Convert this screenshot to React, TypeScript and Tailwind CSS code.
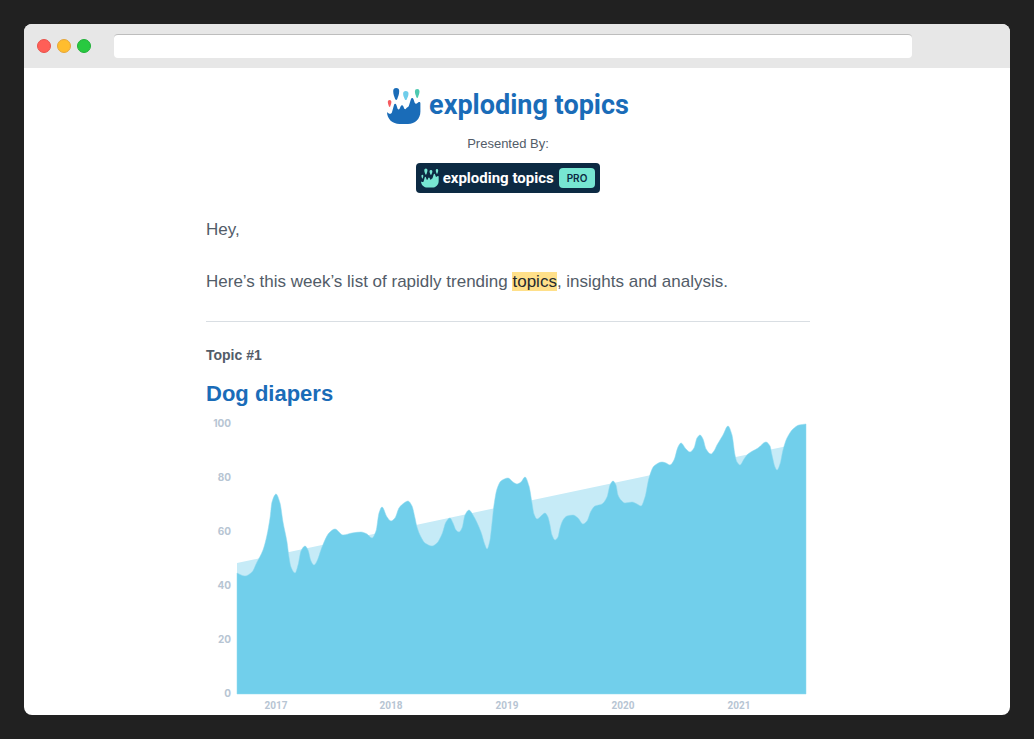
type Point = [number, number];

const BASELINE = 282;

const trend: Point[] = [
  [31, 151],
  [600, 30],
];

const interest: Point[] = [
  [31, 161], [39, 164], [46, 160], [51, 150], [57, 138], [61, 123], [64, 106], [66, 90],
  [70, 82], [74, 91], [77, 110], [81, 130], [83, 145], [85, 155], [89, 161], [92, 153],
  [95, 139], [99, 134], [102, 138], [105, 149], [108, 153], [111, 149], [116, 135],
  [123, 121], [129, 117], [137, 123], [146, 121], [155, 120], [161, 122], [166, 126],
  [170, 119], [173, 101], [176, 95], [181, 105], [185, 109], [189, 106], [193, 96],
  [198, 91], [202, 89], [206, 94], [209, 106], [211, 115], [215, 125], [219, 131],
  [226, 134], [231, 131], [236, 122], [240, 110], [244, 106], [247, 111], [250, 118],
  [253, 120], [256, 116], [259, 103], [263, 98], [267, 103], [275, 120], [279, 133],
  [281, 137], [284, 128], [286, 111], [288, 93], [291, 77], [295, 69], [302, 66],
  [307, 70], [311, 72], [315, 70], [319, 65], [323, 74], [326, 91], [328, 102],
  [331, 107], [335, 104], [339, 101], [342, 105], [344, 113], [346, 123], [349, 128],
  [352, 125], [354, 116], [357, 108], [361, 104], [367, 103], [372, 106], [377, 112],
  [381, 109], [385, 99], [389, 94], [396, 92], [401, 85], [404, 73], [407, 69],
  [410, 73], [412, 83], [415, 88], [419, 91], [426, 90], [431, 92], [435, 94],
  [439, 85], [443, 66], [448, 54], [456, 50], [460, 51], [464, 53], [468, 48],
  [472, 35], [475, 31], [480, 37], [484, 40], [488, 36], [491, 26], [494, 23],
  [497, 27], [500, 37], [505, 42], [508, 39], [511, 33], [517, 23], [522, 14],
  [526, 23], [529, 43], [531, 50], [534, 53], [538, 47], [542, 42], [552, 36],
  [560, 30], [564, 34], [566, 43], [569, 55], [571, 58], [574, 52], [577, 38],
  [581, 26], [587, 17], [593, 13], [600, 12],
];

const scale = [
  { label: "100", y: 15 },
  { label: "80", y: 69 },
  { label: "60", y: 123 },
  { label: "40", y: 177 },
  { label: "20", y: 231 },
  { label: "0", y: 285 },
];

const years = [
  { label: "2017", x: 70 },
  { label: "2018", x: 185 },
  { label: "2019", x: 301 },
  { label: "2020", x: 417 },
  { label: "2021", x: 533 },
];

// Cubic curve through the points that stays monotone between neighbours.
function smoothArea(points: Point[]) {
  const last = points.length - 1;
  const slope = (i: number) => (points[i + 1][1] - points[i][1]) / (points[i + 1][0] - points[i][0]);
  const tangents = points.map((_, i) => {
    if (i === 0) return slope(0);
    if (i === last) return slope(last - 1);
    const left = slope(i - 1);
    const right = slope(i);
    return left * right <= 0 ? 0 : (2 * left * right) / (left + right);
  });
  let d = `M${points[0][0]} ${BASELINE}L${points[0][0]} ${points[0][1]}`;
  for (let i = 0; i < last; i++) {
    const [x0, y0] = points[i];
    const [x1, y1] = points[i + 1];
    const step = (x1 - x0) / 3;
    d += `C${x0 + step} ${y0 + step * tangents[i]} ${x1 - step} ${y1 - step * tangents[i + 1]} ${x1} ${y1}`;
  }
  return `${d}L${points[last][0]} ${BASELINE}Z`;
}

function drop(x: number, y: number, r: number, h: number) {
  return `M${x - r} ${y + r}a${r} ${r} 0 0 1 ${2 * r} 0C${x + r} ${y + h * 0.55} ${x + r * 0.6} ${y + h * 0.7} ${x + r * 0.35} ${y + h * 0.92}Q${x} ${y + h * 1.06} ${x - r * 0.35} ${y + h * 0.92}C${x - r * 0.6} ${y + h * 0.7} ${x - r} ${y + h * 0.55} ${x - r} ${y + r}Z`;
}

type SplashProps = {
  className: string;
  body: string;
  drops: [string, string, string, string];
};

function Splash({ className, body, drops }: SplashProps) {
  return (
    <svg viewBox="0 0 34 36" className={className} aria-hidden="true">
      <path
        fill={body}
        d="M0 24C1.600 26 4 26.500 4.900 24.500L7 17C7.400 15.400 8.900 15.400 9.400 17L10.600 20.700C11 21.800 12.200 21.800 12.600 20.700L13.700 18.200C14.200 16.800 15.800 16.800 16.300 18.200L17.200 20.400C17.600 21.400 18.600 21.400 19.100 20.600C19.800 19.300 21.300 19.600 21.900 17.800L23.900 11.300C24.300 9.700 26 9.700 26.500 11.300L27.700 14.700C28.200 16.200 29.700 16 30.500 15C31.400 13.700 33.400 13.800 33.400 15.200V23.500C33.400 31 28 36 21 36H12.500C5.500 36 0 31 0 24Z"
      />
      <path fill={drops[0]} d={drop(2.6, 12, 1.8, 7)} />
      <path fill={drops[1]} d={drop(9.2, 0, 3, 12)} />
      <path fill={drops[2]} d={drop(18.8, 3, 2.7, 9.2)} />
      <path fill={drops[3]} d={drop(30.2, 1, 2.3, 9)} />
    </svg>
  );
}

function TitleBar() {
  return (
    <header className="flex h-11 items-center bg-[#e7e7e7] pl-[13px]">
      <div className="flex gap-[6px]">
        <span className="size-[14px] rounded-full border border-[#e8524b] bg-[#ff5f57]" />
        <span className="size-[14px] rounded-full border border-[#e5a63a] bg-[#ffbd2e]" />
        <span className="size-[14px] rounded-full border border-[#20b038] bg-[#28c940]" />
      </div>
      <input
        type="text"
        aria-label="Address"
        className="mr-[98px] ml-[23px] h-6 flex-1 rounded border-t border-[#bdbdbd] bg-white px-2 text-sm outline-none"
      />
    </header>
  );
}

function TrendChart() {
  return (
    <svg viewBox="0 0 604 303" className="block w-full" role="img" aria-label="Interest over time">
      <path fill="#c6ebf7" d={smoothArea(trend)} />
      <path fill="#71cfeb" stroke="#8ed9ef" strokeWidth="0.5" d={smoothArea(interest)} />
      <g fill="#b7c5d3" className="font-['Inter',sans-serif] text-[10px] font-bold">
        {scale.map(({ label, y }) => (
          <text key={label} x="25" y={y} textAnchor="end">
            {label}
          </text>
        ))}
      </g>
      <g fill="#b7c5d3" className="font-['Roboto',sans-serif] text-[10px] font-bold">
        {years.map(({ label, x }) => (
          <text key={label} x={x} y="297" textAnchor="middle">
            {label}
          </text>
        ))}
      </g>
    </svg>
  );
}

export default function App() {
  return (
    <div className="min-h-screen bg-[#212121] p-6 font-['Liberation_Sans',Arial,sans-serif]">
      <div className="overflow-hidden rounded-lg bg-white">
        <TitleBar />
        <main className="pt-5 pr-[18px]">
          <article className="mx-auto max-w-[604px] text-[17px] leading-[26px] text-[#525c68]">
            <div className="flex flex-col items-center">
              <div className="flex items-start gap-2">
                <Splash
                  className="h-9 w-[34px]"
                  body="#1a6cb8"
                  drops={["#f65b5f", "#1a6cb8", "#6fcdea", "#4dc9b0"]}
                />
                <span className="font-['Roboto',sans-serif] text-[27px] leading-[34px] font-bold text-[#1a6cb8]">
                  exploding topics
                </span>
              </div>
              <p className="mt-[10px] text-[13px] leading-5">Presented By:</p>
              <a href="#pro" className="mt-[9px] flex h-[30px] items-center rounded bg-[#0c2a43] px-[5px]">
                <Splash
                  className="h-5 w-[18px]"
                  body="#77e6d2"
                  drops={["#77e6d2", "#77e6d2", "#77e6d2", "#77e6d2"]}
                />
                <span className="ml-1 font-['Roboto',sans-serif] text-[15px] leading-5 font-bold text-white">
                  exploding topics
                </span>
                <span className="ml-[5px] rounded bg-[#77e6d2] px-2 font-['Inter',sans-serif] text-[10px] leading-5 font-semibold text-[#0c2a43]">
                  PRO
                </span>
              </a>
            </div>
            <p className="mt-6">Hey,</p>
            <p className="mt-[26px]">
              Here’s this week’s list of rapidly trending{" "}
              <mark className="bg-[#ffe08a] text-[#25292e]">topics</mark>, insights and analysis.
            </p>
            <hr className="mt-[26px] border-[#d9dee3]" />
            <p className="mt-[23px] text-sm leading-5 font-bold">Topic #1</p>
            <h2 className="mt-[15px] mb-1 text-[22px] leading-7 font-bold text-[#1a6cb8]">Dog diapers</h2>
            <TrendChart />
          </article>
        </main>
      </div>
    </div>
  );
}
